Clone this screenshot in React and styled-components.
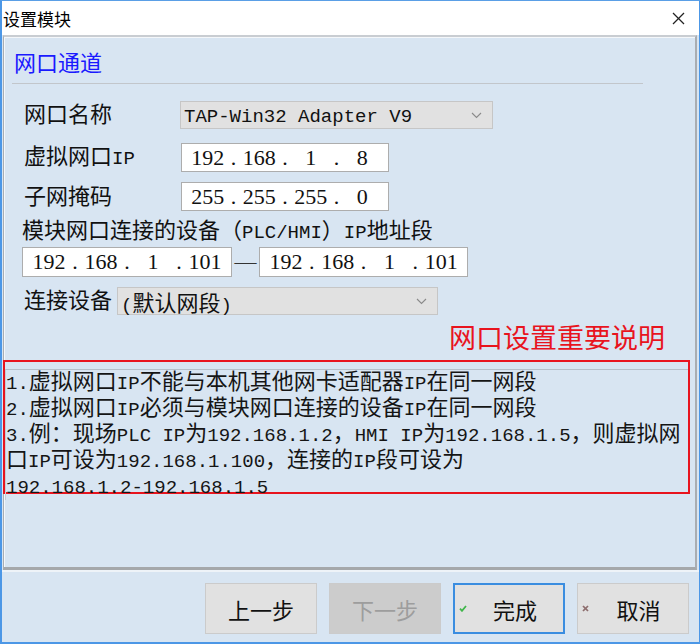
import React from "react";
import styled, { createGlobalStyle } from "styled-components";

const SERIF = `"Liberation Serif", "Noto Sans CJK SC", serif`;
const SANS = `"Noto Sans CJK SC", "Noto Sans", sans-serif`;

const GlobalStyle = createGlobalStyle`
  html, body { margin: 0; padding: 0; background: #ffffff; }
  * { box-sizing: border-box; }
`;

const Window = styled.div`
  width: 700px;
  height: 644px;
  display: flex;
  flex-direction: column;
  border-top: 1px solid #5a9fe6;
  border-left: 2px solid #4c97e6;
  border-right: 1px solid #4c97e6;
  border-bottom: 2px solid #4c97e6;
  background: #d8e5f2;
`;

const TitleBar = styled.div`
  height: 34px;
  flex: none;
  background: #ffffff;
  display: flex;
  align-items: center;
  justify-content: space-between;
  padding: 0 14px 0 1px;
  font-family: ${SANS};
  font-size: 17px;
  color: #000;
`;

const Panel = styled.div`
  height: 535px;
  flex: none;
  margin: 0 2px 0 1px;
  background: #d8e5f2;
  border-top: 2px solid #c9cdd2;
  border-left: 1px solid #a9adb2;
  border-right: 2px solid #a9adb2;
  border-bottom: 3px solid #a5a8ab;
  box-shadow: inset 1px 1px 0 #f4f7fa;
  display: flex;
  flex-direction: column;
`;

const SectionTitle = styled.div`
  margin: 0 52px 0 8px;
  padding: 14px 0 6px 2px;
  line-height: 26px;
  font-family: ${SERIF};
  font-size: 22px;
  color: #1a1aff;
  border-bottom: 1px solid #c2c6cb;
`;

// half-width latin runs, SimSun style
const Lat = styled.span`
  font-family: "Liberation Mono", monospace;
  font-size: 19px;
`;

const mix = (str) =>
  str.split(/([\x20-\x7e]+)/).map((s, i) =>
    /[\x20-\x7e]/.test(s) ? <Lat key={i}>{s}</Lat> : s
  );

const Row = styled.div`
  display: flex;
  align-items: center;
  height: ${(p) => p.$h}px;
  margin-top: ${(p) => p.$mt}px;
  padding-left: ${(p) => p.$pl ?? 20}px;
  font-family: ${SERIF};
  font-size: 22px;
  color: #111;
`;

const Label = styled.span`
  width: ${(p) => p.$w}px;
  flex: none;
  white-space: nowrap;
  line-height: 24px;
`;

const Combo = styled.div`
  width: ${(p) => p.$w}px;
  height: 100%;
  flex: none;
  display: flex;
  align-items: center;
  justify-content: space-between;
  padding: 0 10px 0 3px;
  background: #e1e1e1;
  border: 1px solid #c6c6c6;
  white-space: nowrap;
`;

const IpBox = styled.div`
  width: ${(p) => p.$w}px;
  margin-left: ${(p) => p.$ml ?? 0}px;
  height: 100%;
  flex: none;
  display: flex;
  align-items: center;
  padding: 0 4px;
  background: #ffffff;
  border: 1px solid #adadad;
`;

const IpCell = styled.span`
  flex: 1;
  text-align: center;
`;

const IpDot = styled.span`
  width: 8px;
  text-align: center;
`;

const Dash = styled.span`
  width: 27px;
  flex: none;
  text-align: center;
  color: #333;
`;

const Important = styled.div`
  margin: 8px 30px 0 0;
  height: 28px;
  line-height: 28px;
  text-align: right;
  font-family: ${SANS};
  font-size: 27px;
  color: #e8141e;
`;

const RedBox = styled.div`
  margin: 9px 0 0 -1px;
  width: 687px;
  height: 134px;
  border: 2px solid #e8141e;
  padding-top: 7px;
`;

const Notes = styled.div`
  border-top: 1px solid #b6bfc9;
  border-left: 1px solid #c5ccd4;
  font-family: ${SERIF};
  font-size: 22px;
  line-height: 23px;
  color: #151515;
  white-space: nowrap;
`;

const Footer = styled.div`
  flex: 1;
  border-top: 2px solid #eef3f8;
  display: flex;
  justify-content: flex-end;
  gap: 12px;
  padding: 11px 10px 0 0;
`;

const Button = styled.div`
  width: 112px;
  height: 51px;
  display: flex;
  align-items: center;
  padding-left: ${(p) => (p.$icon ? 4 : 0)}px;
  background: ${(p) => (p.$disabled ? "#cccccc" : "#e1e1e1")};
  border: ${(p) => (p.$focus ? "2px solid #3a8de0" : "1px solid #cbcbcb")};
  font-family: ${SANS};
  font-size: 22px;
  color: ${(p) => (p.$disabled ? "#9d9d9d" : "#111")};
`;

const ButtonText = styled.span`
  flex: 1;
  text-align: center;
`;

const Chevron = () => (
  <svg width="11" height="7" viewBox="0 0 11 7">
    <polyline points="1,1 5.5,5.5 10,1" fill="none" stroke="#8a8a8a" strokeWidth="1.1" />
  </svg>
);

const CloseIcon = () => (
  <svg width="13" height="13" viewBox="0 0 13 13">
    <line x1="1" y1="1" x2="12" y2="12" stroke="#222" strokeWidth="1.2" />
    <line x1="12" y1="1" x2="1" y2="12" stroke="#222" strokeWidth="1.2" />
  </svg>
);

const CheckIcon = () => (
  <svg width="8" height="7" viewBox="0 0 8 7">
    <polyline points="1,3.6 3,5.8 7,1" fill="none" stroke="#3fb64a" strokeWidth="1.8" />
  </svg>
);

const CrossIcon = () => (
  <svg width="7" height="7" viewBox="0 0 7 7">
    <line x1="1" y1="1" x2="6" y2="6" stroke="#8d6e6e" strokeWidth="1.7" />
    <line x1="6" y1="1" x2="1" y2="6" stroke="#8d6e6e" strokeWidth="1.7" />
  </svg>
);

const Ip = ({ parts, w, ml }) => (
  <IpBox $w={w} $ml={ml}>
    {parts.map((p, i) => (
      <React.Fragment key={i}>
        {i > 0 && <IpDot>.</IpDot>}
        <IpCell>{p}</IpCell>
      </React.Fragment>
    ))}
  </IpBox>
);

const notes = [
  "1.虚拟网口IP不能与本机其他网卡适配器IP在同一网段",
  "2.虚拟网口IP必须与模块网口连接的设备IP在同一网段",
  "3.例：现场PLC IP为192.168.1.2，HMI IP为192.168.1.5，则虚拟网",
  "口IP可设为192.168.1.100，连接的IP段可设为",
  "192.168.1.2-192.168.1.5",
];

export default function App() {
  return (
    <>
      <GlobalStyle />
      <Window>
        <TitleBar>
          <span>设置模块</span>
          <CloseIcon />
        </TitleBar>
        <Panel>
          <SectionTitle>网口通道</SectionTitle>
          <Row $h={28} $mt={17}>
            <Label $w={156}>网口名称</Label>
            <Combo $w={313}>
              <span>{mix("TAP-Win32 Adapter V9")}</span>
              <Chevron />
            </Combo>
          </Row>
          <Row $h={29} $mt={14}>
            <Label $w={156}>{mix("虚拟网口IP")}</Label>
            <Ip parts={["192", "168", "1", "8"]} w={208} ml={1} />
          </Row>
          <Row $h={29} $mt={10}>
            <Label $w={156}>子网掩码</Label>
            <Ip parts={["255", "255", "255", "0"]} w={208} ml={1} />
          </Row>
          <Row $h={24} $mt={9} $pl={18}>
            <Label>{mix("模块网口连接的设备（PLC/HMI）IP地址段")}</Label>
          </Row>
          <Row $h={30} $mt={3} $pl={18}>
            <Ip parts={["192", "168", "1", "101"]} w={210} />
            <Dash>—</Dash>
            <Ip parts={["192", "168", "1", "101"]} w={209} />
          </Row>
          <Row $h={28} $mt={10}>
            <Label $w={93}>连接设备</Label>
            <Combo $w={321}>
              <span>{mix("(默认网段)")}</span>
              <Chevron />
            </Combo>
          </Row>
          <Important>网口设置重要说明</Important>
          <RedBox>
            <Notes>
              {notes.map((n, i) => (
                <div key={i}>{mix(n)}</div>
              ))}
            </Notes>
          </RedBox>
        </Panel>
        <Footer>
          <Button>
            <ButtonText>上一步</ButtonText>
          </Button>
          <Button $disabled>
            <ButtonText>下一步</ButtonText>
          </Button>
          <Button $focus $icon>
            <CheckIcon />
            <ButtonText>完成</ButtonText>
          </Button>
          <Button $icon>
            <CrossIcon />
            <ButtonText>取消</ButtonText>
          </Button>
        </Footer>
      </Window>
    </>
  );
}
